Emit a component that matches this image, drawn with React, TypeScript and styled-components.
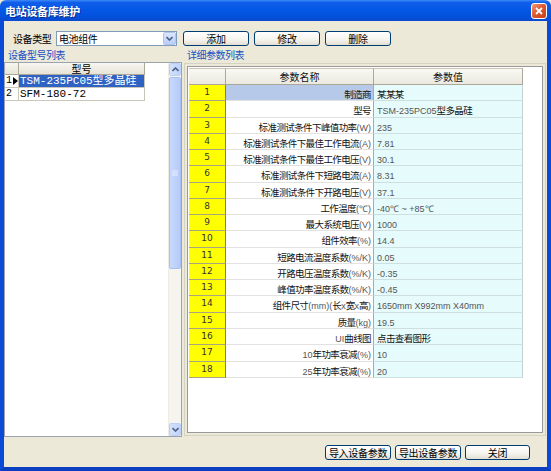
import React from "react";
import styled, { createGlobalStyle } from "styled-components";

const GlobalStyle = createGlobalStyle`
  html, body {
    margin: 0;
    padding: 0;
    background: #ece9d8;
  }
  * {
    box-sizing: border-box;
  }
`;

const UI_FONT = `"Liberation Sans", "Noto Sans CJK SC", sans-serif`;
const CJK_FONT = `"Noto Sans CJK SC", "Liberation Sans", sans-serif`;

const Window = styled.div`
  width: 551px;
  height: 471px;
  display: flex;
  flex-direction: column;
  font-family: ${UI_FONT};
  overflow: hidden;
`;

const TitleBar = styled.div`
  height: 21px;
  flex: none;
  display: flex;
  align-items: center;
  justify-content: space-between;
  padding: 0 4px 0 5px;
  background: linear-gradient(
    #3d8af7 0%,
    #0f5ee9 12%,
    #0558e6 45%,
    #0252de 75%,
    #0a49cf 100%
  );
  border-radius: 6px 6px 0 0;
`;

const Title = styled.span`
  color: #fff;
  font-family: ${CJK_FONT};
  font-size: 11px;
  font-weight: bold;
  text-shadow: 1px 1px 0 #0a2a8a;
  letter-spacing: -0.3px;
`;

const CloseButton = styled.div`
  width: 16px;
  height: 16px;
  border: 1px solid #fff;
  border-radius: 3px;
  background: linear-gradient(135deg, #f09a7d 0%, #df5a32 45%, #c4401a 100%);
  display: flex;
  align-items: center;
  justify-content: center;
`;

const Body = styled.div`
  flex: 1;
  display: flex;
  flex-direction: column;
  background: #ece9d8;
  border-left: 4px solid #0a4ad6;
  border-right: 4px solid #0a4ad6;
  border-bottom: 4px solid #0a3fc2;
`;

const Toolbar = styled.div`
  height: 15px;
  margin-top: 10px;
  padding-left: 9px;
  display: flex;
  align-items: center;
`;

const Label = styled.span`
  font-family: ${CJK_FONT};
  font-size: 10px;
  color: #000;
  width: 43px;
  letter-spacing: -0.4px;
`;

const Combo = styled.div`
  width: 121px;
  height: 15px;
  border: 1px solid #7f9db9;
  background: #fff;
  display: flex;
  align-items: center;
  justify-content: space-between;
  padding-left: 2px;
  margin-right: 6px;
`;

const ComboText = styled.span`
  font-family: ${CJK_FONT};
  font-size: 10px;
  letter-spacing: -0.4px;
`;

const ComboArrow = styled.div`
  width: 13px;
  height: 13px;
  border-radius: 2px;
  background: linear-gradient(#dce7fd, #b9cdf9);
  border: 1px solid #b3c6f2;
  display: flex;
  align-items: center;
  justify-content: center;
`;

const Button = styled.button<{ $w: number }>`
  width: ${(p) => p.$w}px;
  height: 15px;
  padding: 0;
  border: 1px solid #003c74;
  border-radius: 3px;
  background: linear-gradient(#ffffff 0%, #f6f5f0 55%, #e3ded2 100%);
  font-family: ${CJK_FONT};
  font-size: 10px;
  color: #000;
  line-height: 13px;
  letter-spacing: -0.3px;
  margin-right: 5px;
`;

const Main = styled.div`
  display: flex;
  height: 391px;
`;

const Column = styled.div<{ $w?: number }>`
  display: flex;
  flex-direction: column;
  ${(p) => (p.$w ? `width: ${p.$w}px;` : "flex: 1;")}
`;

const SectionLabel = styled.div<{ $pad: number }>`
  height: 16px;
  padding-left: ${(p) => p.$pad}px;
  padding-top: 3px;
  font-family: ${CJK_FONT};
  font-size: 10px;
  line-height: 12px;
  color: #1b4fc4;
  letter-spacing: -0.5px;
`;

const ListPanel = styled.div`
  height: 375px;
  border: 1px solid #9aa3ae;
  background: #fff;
  display: flex;
`;

const ListGrid = styled.div`
  flex: 1;
  display: grid;
  grid-template-columns: 14px 126px;
  grid-template-rows: 12px 13px 13px;
  align-content: start;
`;

const HeaderCell = styled.div<{ $corner?: boolean }>`
  background: linear-gradient(#f7f6f1, #e6e3d7);
  border-right: 1px solid #aca899;
  border-bottom: 1px solid #aca899;
  font-family: ${CJK_FONT};
  font-size: 10px;
  line-height: 11px;
  text-align: center;
  color: #000;
`;

const RowHead = styled.div`
  background: #fff;
  border-right: 1px solid #c9c6ba;
  border-bottom: 1px solid #c9c6ba;
  font-family: "Liberation Mono", monospace;
  font-size: 10px;
  line-height: 12px;
  padding-left: 1px;
  display: flex;
  align-items: center;
  gap: 1px;
`;

const ListCell = styled.div<{ $selected?: boolean }>`
  background: ${(p) => (p.$selected ? "#2f63c3" : "#fff")};
  color: ${(p) => (p.$selected ? "#fff" : "#000")};
  border-right: 1px solid #c9c6ba;
  border-bottom: 1px solid #c9c6ba;
  font-family: "Liberation Mono", "Noto Sans CJK SC", monospace;
  font-size: 11px;
  line-height: 12px;
  padding-left: 1px;
  white-space: nowrap;
  overflow: hidden;
`;

const ScrollBar = styled.div`
  width: 13px;
  background: #f5f4ef;
  display: flex;
  flex-direction: column;
  border-left: 1px solid #eeede5;
`;

const ScrollBtn = styled.div`
  height: 13px;
  flex: none;
  border-radius: 2px;
  border: 1px solid #bcd0f7;
  background: linear-gradient(90deg, #d4e1fc, #c0d3fb);
  display: flex;
  align-items: center;
  justify-content: center;
`;

const Thumb = styled.div`
  height: 192px;
  margin-top: 1px;
  border-radius: 2px;
  border: 1px solid #a9c0f4;
  background: linear-gradient(90deg, #c9d9fd, #b7cbf8);
  display: flex;
  align-items: center;
  justify-content: center;
`;

const Track = styled.div`
  flex: 1;
`;

const ParamFrame = styled.div`
  height: 373px;
  margin: 1px 1px 0 2px;
  border: 1px solid #d6d2c4;
  padding: 2px;
`;

const ParamBox = styled.div`
  height: 100%;
  border: 1px solid #9a9a9a;
  background: #fff;
  padding: 1px 0 0 1px;
`;

const ParamGrid = styled.div`
  display: grid;
  grid-template-columns: 37px 148px 149px;
  grid-template-rows: 17px repeat(18, 16.28px);
`;

const GridHead = styled.div`
  background: linear-gradient(#f9f8f3, #ebe9df);
  border-right: 1px solid #aca899;
  border-bottom: 1px solid #aca899;
  border-top: 1px solid #c8c5b8;
  font-family: ${CJK_FONT};
  font-size: 10px;
  line-height: 15px;
  text-align: center;
  color: #111;
`;

const NumCell = styled.div`
  background: #ffff00;
  border-right: 1px solid #7d7b62;
  border-bottom: 1px solid #a8a584;
  font-family: "DejaVu Sans", sans-serif;
  font-size: 9px;
  line-height: 15px;
  text-align: center;
  color: #333;
`;

const NameCell = styled.div<{ $active?: boolean }>`
  background: ${(p) => (p.$active ? "#b7c9e9" : "#fff")};
  border-right: 1px solid #a9a9a9;
  border-bottom: 1px solid #e2e2e2;
  text-align: right;
  padding-right: 2px;
  line-height: 15px;
  white-space: nowrap;
  overflow: hidden;
`;

const ValueCell = styled.div`
  background: #e6fbfb;
  border-right: 1px solid #c3d4d4;
  border-bottom: 1px solid #cfdfdf;
  padding-left: 3px;
  line-height: 15px;
  white-space: nowrap;
  overflow: hidden;
`;

const Cjk = styled.span`
  font-family: ${CJK_FONT};
  font-size: 9.5px;
  color: #111;
  letter-spacing: -0.6px;
`;

const Latin = styled.span`
  font-family: "Liberation Sans", sans-serif;
  font-size: 9px;
  color: #555;
`;

const Footer = styled.div`
  display: flex;
  justify-content: flex-end;
  margin-top: 8px;
  padding-right: 13px;
`;

const FooterButton = styled(Button)`
  margin-right: 4px;
`;

const rows: [string, string][] = [
  ["制造商", "某某某"],
  ["型号", "TSM-235PC05型多晶硅"],
  ["标准测试条件下峰值功率(W)", "235"],
  ["标准测试条件下最佳工作电流(A)", "7.81"],
  ["标准测试条件下最佳工作电压(V)", "30.1"],
  ["标准测试条件下短路电流(A)", "8.31"],
  ["标准测试条件下开路电压(V)", "37.1"],
  ["工作温度(℃)", "-40℃ ~ +85℃"],
  ["最大系统电压(V)", "1000"],
  ["组件效率(%)", "14.4"],
  ["短路电流温度系数(%/K)", "0.05"],
  ["开路电压温度系数(%/K)", "-0.35"],
  ["峰值功率温度系数(%/K)", "-0.45"],
  ["组件尺寸(mm)(长x宽x高)", "1650mm X992mm X40mm"],
  ["质量(kg)", "19.5"],
  ["UI曲线图", "点击查看图形"],
  ["10年功率衰减(%)", "10"],
  ["25年功率衰减(%)", "20"],
];

// split mixed text so Chinese and Latin runs get their own font
function Mixed({ text }: { text: string }) {
  const parts = text.match(/[\u4e00-\u9fff]+|[^\u4e00-\u9fff]+/g) || [];
  return (
    <>
      {parts.map((p, i) =>
        /[\u4e00-\u9fff]/.test(p) ? <Cjk key={i}>{p}</Cjk> : <Latin key={i}>{p}</Latin>
      )}
    </>
  );
}

const Chevron = ({ up }: { up?: boolean }) => (
  <svg width="7" height="5" viewBox="0 0 7 5">
    <path
      d={up ? "M0.5 4 L3.5 1 L6.5 4" : "M0.5 1 L3.5 4 L6.5 1"}
      fill="none"
      stroke="#4d6185"
      strokeWidth="1.6"
    />
  </svg>
);

export default function App() {
  return (
    <Window>
      <GlobalStyle />
      <TitleBar>
        <Title>电站设备库维护</Title>
        <CloseButton>
          <svg width="8" height="8" viewBox="0 0 8 8">
            <path d="M1 1 L7 7 M7 1 L1 7" stroke="#fff" strokeWidth="1.8" />
          </svg>
        </CloseButton>
      </TitleBar>
      <Body>
        <Toolbar>
          <Label>设备类型</Label>
          <Combo>
            <ComboText>电池组件</ComboText>
            <ComboArrow>
              <Chevron />
            </ComboArrow>
          </Combo>
          <Button $w={66}>添加</Button>
          <Button $w={66}>修改</Button>
          <Button $w={66}>删除</Button>
        </Toolbar>
        <Main>
          <Column $w={178}>
            <SectionLabel $pad={4}>设备型号列表</SectionLabel>
            <ListPanel>
              <ListGrid>
                <HeaderCell />
                <HeaderCell>型号</HeaderCell>
                <RowHead>
                  1
                  <svg width="5" height="8" viewBox="0 0 5 8">
                    <path d="M0 0 L5 4 L0 8 Z" fill="#000" />
                  </svg>
                </RowHead>
                <ListCell $selected>TSM-235PC05型多晶硅</ListCell>
                <RowHead>2</RowHead>
                <ListCell>SFM-180-72</ListCell>
              </ListGrid>
              <ScrollBar>
                <ScrollBtn>
                  <Chevron up />
                </ScrollBtn>
                <Thumb>
                  <svg width="6" height="7" viewBox="0 0 6 7">
                    <path d="M0 1h6M0 3h6M0 5h6" stroke="#e8efff" strokeWidth="1" />
                  </svg>
                </Thumb>
                <Track />
                <ScrollBtn>
                  <Chevron />
                </ScrollBtn>
              </ScrollBar>
            </ListPanel>
          </Column>
          <Column>
            <SectionLabel $pad={5}>详细参数列表</SectionLabel>
            <ParamFrame>
              <ParamBox>
                <ParamGrid>
                  <GridHead />
                  <GridHead>参数名称</GridHead>
                  <GridHead>参数值</GridHead>
                  {rows.map(([name, value], i) => (
                    <React.Fragment key={i}>
                      <NumCell>{i + 1}</NumCell>
                      <NameCell $active={i === 0}>
                        <Mixed text={name} />
                      </NameCell>
                      <ValueCell>
                        <Mixed text={value} />
                      </ValueCell>
                    </React.Fragment>
                  ))}
                </ParamGrid>
              </ParamBox>
            </ParamFrame>
          </Column>
        </Main>
        <Footer>
          <FooterButton $w={66}>导入设备参数</FooterButton>
          <FooterButton $w={66}>导出设备参数</FooterButton>
          <FooterButton $w={65}>关闭</FooterButton>
        </Footer>
      </Body>
    </Window>
  );
}
